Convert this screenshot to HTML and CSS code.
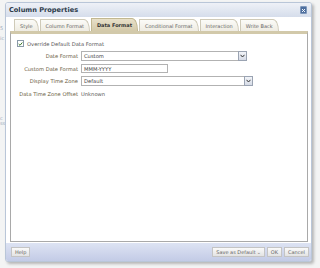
FILE: index.html
```html
<!DOCTYPE html>
<html>
<head>
<meta charset="utf-8">
<link rel="stylesheet" href="styles.css">
</head>
<body>
<div class="page">
  <div class="bgtext">5<br><br>ic<br><br><br><br><br><br><br><br><br><br><br><br><br><br><br><br>c<br>ss</div>
  <div class="dialog">
    <div class="titlebar">
      <span class="title">Column Properties</span>
      <span class="close"><svg width="7" height="7" viewBox="0 0 7 7"><path d="M1.5 1.5 L5.5 5.5 M5.5 1.5 L1.5 5.5" stroke="#fff" stroke-width="1.4"/></svg></span>
    </div>
    <div class="body">
      <div class="tabs">
        <div class="tab">Style</div>
        <div class="tab">Column Format</div>
        <div class="tab active">Data Format</div>
        <div class="tab">Conditional Format</div>
        <div class="tab">Interaction</div>
        <div class="tab">Write Back</div>
      </div>
      <div class="panel">
        <div class="check-row">
          <span class="checkbox"><svg width="6" height="6" viewBox="0 0 6 6"><path d="M0.8 3 L2.4 4.6 L5.2 1.2" stroke="#3a7a2a" stroke-width="1.2" fill="none"/></svg></span>
          <span>Override Default Data Format</span>
        </div>
        <div class="form">
          <div class="label">Date Format</div>
          <div class="select wide1"><span>Custom</span><span class="arrow"><svg width="5" height="4" viewBox="0 0 5 4"><path d="M0.5 0.8 L2.5 3 L4.5 0.8" stroke="#333" stroke-width="1" fill="none"/></svg></span></div>
          <div class="label">Custom Date Format</div>
          <div class="input"><span>MMM-YYYY</span></div>
          <div class="label">Display Time Zone</div>
          <div class="select wide2"><span>Default</span><span class="arrow"><svg width="5" height="4" viewBox="0 0 5 4"><path d="M0.5 0.8 L2.5 3 L4.5 0.8" stroke="#333" stroke-width="1" fill="none"/></svg></span></div>
          <div class="label">Data Time Zone Offset</div>
          <div class="value">Unknown</div>
        </div>
      </div>
    </div>
    <div class="footer">
      <div class="btn">Help</div>
      <div class="spacer"></div>
      <div class="btn">Save as Default <span class="caret">&#x2304;</span></div>
      <div class="btn">OK</div>
      <div class="btn">Cancel</div>
    </div>
  </div>
</div>
</body>
</html>
```
FILE: styles.css
```css
* { box-sizing: border-box; }
html, body { margin: 0; padding: 0; }
body {
  width: 320px; height: 268px; overflow: hidden;
  background: #f3f4f4;
  font-family: "DejaVu Sans", Verdana, sans-serif;
  font-size: 5.2px;
  color: #555;
}
.page {
  position: relative;
  width: 320px; height: 268px;
  padding: 2px 0 0 5px;
}
.bgtext {
  position: absolute; left: 0; top: 26px;
  font-size: 5px; line-height: 5px; color: #9aa9bb;
}
.dialog {
  position: relative;
  width: 307px; height: 260px;
  display: flex; flex-direction: column;
  background: #fff;
  border: 1px solid #b9c6d8;
  border-radius: 3px;
  box-shadow: 2px 2px 3px rgba(0,0,0,0.25);
  overflow: hidden;
}
.titlebar {
  height: 14px;
  flex: none;
  display: flex; align-items: center; justify-content: space-between;
  padding: 0 4px 0 3px;
  background: linear-gradient(#eef1f7, #d5ddeb);
}
.title {
  font-family: "DejaVu Sans", Verdana, sans-serif;
  font-weight: bold; font-size: 6.6px; color: #2c3a4a;
}
.close {
  width: 7px; height: 8px;
  background: #4e6f9f;
  border: 1px solid #7f98bb;
  display: flex; align-items: center; justify-content: center;
  border-radius: 1px;
}
.body {
  flex: 1;
  display: flex; flex-direction: column;
  padding: 1px 3px 1px 4px;
}
.tabs {
  display: flex; align-items: flex-end;
  height: 13px;
  padding-left: 4px;
  gap: 1px;
}
.tab {
  height: 12px;
  padding: 0 5px 0 5px;
  display: flex; align-items: center;
  border: 1px solid #cfcab8;
  border-bottom: none;
  border-top-right-radius: 6px 12px;
  background: linear-gradient(#fbfbf8, #efece2);
  color: #666;
  font-size: 5px;
}
.tab.active {
  height: 13px;
  background: linear-gradient(#e8e0c9, #d3c9a9);
  border-color: #c2b891;
  font-weight: bold;
  color: #333;
}
.panel {
  flex: 1;
  border: 1px solid #a9a9a9;
  border-top: 3px solid #d2c9aa;
  padding: 5px 6px;
}
.check-row {
  display: flex; align-items: center; gap: 3px;
  height: 9px;
  color: #555;
}
.checkbox {
  width: 7px; height: 7px;
  border: 1px solid #8a9aa8;
  background: #fff;
  display: flex; align-items: center; justify-content: center;
}
.form {
  display: grid;
  grid-template-columns: 61px auto;
  column-gap: 3px;
  row-gap: 3px;
  margin-top: 3px;
  align-items: center;
}
.label { text-align: right; color: #6b6043; }
.select, .input {
  height: 10px;
  border: 1px solid #b2b2b2;
  display: flex; align-items: center; justify-content: space-between;
  padding-left: 2px;
  color: #444;
}
.wide1 { width: 166px; }
.wide2 { width: 172px; }
.input { width: 87px; height: 9px; }
.arrow {
  width: 9px; height: 10px; margin-top: -1px; margin-right: -1px;
  border: 1px solid #9aa3b2;
  background: linear-gradient(#f2f4f8, #d6dbe6);
  display: flex; align-items: center; justify-content: center;
}
.value { color: #555; height: 10px; display: flex; align-items: center; }
.footer {
  height: 18px; flex: none;
  display: flex; align-items: center; gap: 2px;
  padding: 0 2px 0 5px;
  background: linear-gradient(#dde3f3, #c3cbe6);
}
.spacer { flex: 1; }
.btn {
  height: 10px;
  padding: 0 3px;
  display: flex; align-items: center;
  border: 1px solid #c4c4c4;
  background: linear-gradient(#fafafa, #e3e3e3);
  color: #666;
  font-size: 5px;
}
.caret { font-size: 5px; margin-left: 1px; }
```
